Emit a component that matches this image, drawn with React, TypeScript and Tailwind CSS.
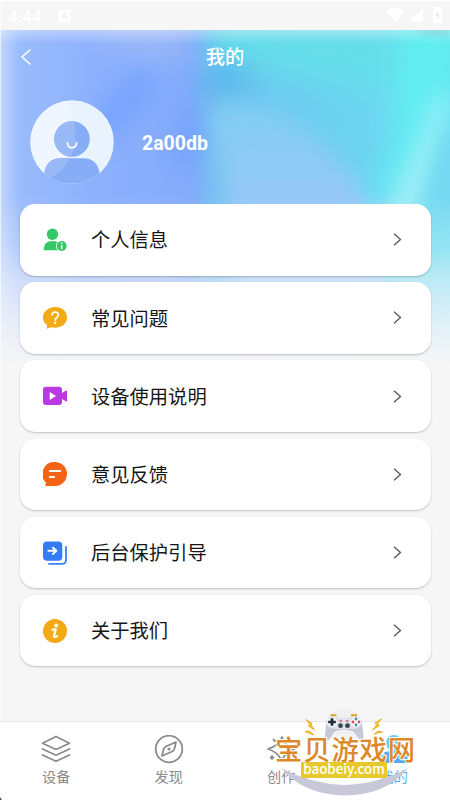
import React from "react";

const cjk = "font-['Roboto','Noto_Sans_CJK_SC',sans-serif]";

function Backdrop() {
  return (
    <svg className="absolute left-0 top-[30px]" width="450" height="335" viewBox="0 30 450 335" aria-hidden="true">
      <defs>
        <filter id="b6" x="-50%" y="-50%" width="200%" height="200%"><feGaussianBlur stdDeviation="7" /></filter>
        <filter id="b10" x="-50%" y="-50%" width="200%" height="200%"><feGaussianBlur stdDeviation="11" /></filter>
        <filter id="b14" x="-60%" y="-60%" width="220%" height="220%"><feGaussianBlur stdDeviation="14" /></filter>
        <linearGradient id="base" x1="0" y1="0" x2="1" y2="0">
          <stop offset="0" stopColor="#9cbefc" />
          <stop offset=".22" stopColor="#8db0fd" />
          <stop offset=".42" stopColor="#84acfa" />
          <stop offset=".5" stopColor="#6cc4f0" />
          <stop offset="1" stopColor="#6ee0f1" />
        </linearGradient>
        <linearGradient id="fade" x1="0" y1="195" x2="0" y2="365" gradientUnits="userSpaceOnUse">
          <stop offset="0" stopColor="#f6f6f6" stopOpacity="0" />
          <stop offset=".3" stopColor="#f0f2f8" stopOpacity=".28" />
          <stop offset=".5" stopColor="#f0f2f8" stopOpacity=".6" />
          <stop offset=".75" stopColor="#f2f3f8" stopOpacity=".86" />
          <stop offset="1" stopColor="#f6f6f6" />
        </linearGradient>
        <linearGradient id="left" x1="0" x2="1" y1="0" y2="0">
          <stop offset="0" stopColor="#fff" stopOpacity=".36" />
          <stop offset="1" stopColor="#fff" stopOpacity="0" />
        </linearGradient>
        <linearGradient id="top" x1="0" x2="0" y1="0" y2="1">
          <stop offset="0" stopColor="#fff" stopOpacity=".34" />
          <stop offset="1" stopColor="#fff" stopOpacity="0" />
        </linearGradient>
        <linearGradient id="wave" x1="0" x2="0" y1="120" y2="230" gradientUnits="userSpaceOnUse">
          <stop offset="0" stopColor="#84cdf3" />
          <stop offset="1" stopColor="#9cc6f9" />
        </linearGradient>
      </defs>
      <rect x="0" y="30" width="450" height="335" fill="url(#base)" />
      <path d="M85 130L150 60L150 90L110 140Z" fill="#6c9cff" filter="url(#b14)" opacity=".9" />
      <path d="M60 10L195 10L180 60L120 54Z" fill="#a0bbf8" filter="url(#b14)" opacity=".8" />
      <path d="M170 160L185 110L215 100L195 170Z" fill="#6a9ffa" filter="url(#b14)" opacity=".75" />
      <path d="M205 20L460 20L460 90L350 90L220 62Z" fill="#66deea" filter="url(#b14)" />
      <path d="M200 70L245 62L250 92L202 100Z" fill="#54b3ea" filter="url(#b14)" opacity=".8" />
      <path d="M207 108Q235 92 290 118Q350 150 385 225L375 310L240 310Q225 190 207 108Z" fill="url(#wave)" filter="url(#b10)" />
      <path d="M300 95Q360 110 390 190L335 135Z" fill="#6ad2ef" filter="url(#b14)" opacity=".9" />
      <path d="M400 20L465 10L450 100L415 180L365 210L395 150Z" fill="#5ef1f2" filter="url(#b14)" opacity=".85" />
      <path d="M440 90L450 100L430 170L410 235L370 240Q410 170 440 90Z" fill="#b2f3fb" filter="url(#b10)" opacity=".8" />
      <path d="M442 140L465 120L465 220L428 235Z" fill="#76d7f1" filter="url(#b10)" />
      <rect x="0" y="30" width="20" height="335" fill="url(#left)" />
      <rect x="0" y="30" width="450" height="14" fill="url(#top)" />
      <rect x="420" y="22" width="30" height="11" fill="#7fa9b4" opacity=".5" filter="url(#b6)" />
      <rect x="0" y="190" width="450" height="175" fill="url(#fade)" />
    </svg>
  );
}

function StatusBar() {
  return (
    <div className="relative flex h-[30px] shrink-0 items-center border-t border-white bg-[#f6f6f6] pl-[8px] pr-[7px] text-white">
      <span className="relative top-px w-[50px] font-['Roboto',sans-serif] text-[17px] font-medium leading-none">4:44</span>
      <svg width="13" height="14" viewBox="0 0 13 14">
        <rect x=".5" y=".5" width="12" height="13" rx="1.5" fill="#fff" />
        <path d="M3.5 10L6.5 3.5L9.5 10M4.5 8H8.5" fill="none" stroke="#f3f3f3" strokeWidth="1.4" />
      </svg>
      <svg className="ml-auto" width="57" height="18" viewBox="0 0 57 18" fill="#fff">
        <path d="M0 4Q9.500 -2 19 4L9.500 16Z" />
        <path d="M37 1V15H23Z" />
        <path d="M47 2H49V0H54V2H56V16H47Z" />
        <path d="M52 4L49 9H51.500V13L54.500 8H52Z" fill="#eee" />
      </svg>
    </div>
  );
}

function Avatar() {
  return (
    <svg width="84" height="84" viewBox="0 0 84 84">
      <defs>
        <clipPath id="disc"><circle cx="42" cy="42" r="41.800" /></clipPath>
        <clipPath id="person">
          <circle cx="42" cy="39" r="17.800" />
          <path d="M14.500 84V73C15 64 22 58.300 30 58.300H54C63 58.300 69 65 69.500 73V84Z" />
        </clipPath>
      </defs>
      <circle cx="42" cy="42" r="41.800" fill="#e9f3fe" />
      <path d="M35 1A42 42 0 0 0 14 73Q44 65 45 32Q44 13 35 1Z" fill="#eff6ff" />
      <g clipPath="url(#disc)">
        <g clipPath="url(#person)">
          <rect width="84" height="84" fill="#86adf5" />
          <path d="M0 0H38Q45 16 45.500 35Q45 65 19 79L0 84Z" fill="#98b9f6" />
        </g>
      </g>
      <path d="M37.500 43C37.800 49.300 46.200 49.300 46.500 43" fill="none" stroke="#f2f7ff" strokeWidth="2" strokeLinecap="round" />
    </svg>
  );
}

const icons: Record<string, React.ReactNode> = {
  profile: (
    <>
      <circle cx="9.500" cy="6.200" r="5.700" fill="#35c866" />
      <path d="M.7 22.300C.6 16 4 13 9.500 13C14 13 18 15 18 22.300Z" fill="#35c866" />
      <circle cx="18.700" cy="18" r="5.700" fill="#fff" />
      <circle cx="18.700" cy="18" r="4.900" fill="#35c866" />
      <path d="M18.700 14.600V16M18.700 17V21.200" stroke="#d9f7e3" strokeWidth="1.700" />
    </>
  ),
  question: (
    <>
      <path d="M12.500 1C19 1 24 5.300 24 11.300S19 21.700 12 21.700L8.200 21.200L3.800 22.800Q4.500 20.500 3.800 18.800Q0 16 0 11.200C0 5.300 5.500 1 12.500 1Z" fill="#f4aa16" />
      <path d="M9 8.800C9 5.200 15.500 5.300 15.400 9C15.300 11.300 12.300 11.700 12.300 14" fill="none" stroke="#fff" strokeWidth="1.800" strokeLinecap="round" />
      <circle cx="12.200" cy="17" r="1.200" fill="#fff" />
    </>
  ),
  video: (
    <>
      <path d="M3 2.800H16Q19 2.800 19 6V9L23.200 6.600Q24 6.300 24 7.200V17Q24 18 23.200 17.500L19 15V18Q19 21 16 21H3Q0 21 0 18V6Q0 2.800 3 2.800Z" fill="#b83ae0" />
      <path d="M7 8.600V15.400L12.500 12Z" fill="#fff" stroke="#fff" strokeWidth=".7" strokeLinejoin="round" />
    </>
  ),
  feedback: (
    <>
      <path d="M12 0A12 12 0 1 1 12 24H3Q2 24 2.400 23L3 20.600A12 12 0 0 1 12 0Z" fill="#f46213" />
      <path d="M6.800 9H17.300M6.800 15H11" stroke="#fff" strokeWidth="2" strokeLinecap="round" />
    </>
  ),
  guide: (
    <>
      <rect width="19.300" height="19.300" y=".4" rx="4" fill="#347cf4" />
      <path d="M5.500 9.800H13M10 6.700L13.300 9.800L10 13" fill="none" stroke="#fff" strokeWidth="2" strokeLinecap="round" strokeLinejoin="round" />
      <path d="M23 6V19Q23 22.900 19 22.900H6" fill="none" stroke="#3b80f4" strokeWidth="1.800" strokeLinecap="round" />
    </>
  ),
  about: (
    <>
      <circle cx="12" cy="12" r="12" fill="#f4aa16" />
      <circle cx="13.200" cy="6.500" r="1.900" fill="#fff" />
      <path d="M9.400 10.700L12.700 10.300L11 17Q10.800 18.500 14 17.200" fill="none" stroke="#fff" strokeWidth="2.300" strokeLinecap="round" strokeLinejoin="round" />
    </>
  ),
};

const rows = [
  { id: "profile", label: "个人信息" },
  { id: "question", label: "常见问题" },
  { id: "video", label: "设备使用说明" },
  { id: "feedback", label: "意见反馈" },
  { id: "guide", label: "后台保护引导" },
  { id: "about", label: "关于我们" },
];

function Row({ id, label }: { id: string; label: string }) {
  return (
    <button className="flex h-[71.500px] w-full items-center rounded-[15px] bg-white pl-[23.500px] pr-[29px] text-left shadow-[0_1px_2px_rgba(0,0,0,0.22)]">
      <svg width="24" height="24" viewBox="0 0 24 24">{icons[id]}</svg>
      <span className="ml-[24px] pt-[2.500px] text-[19.300px] leading-none text-[#161616]">{label}</span>
      <svg className="ml-auto" width="9" height="13" viewBox="0 0 9 13">
        <path d="M1 .8L7.500 6.500L1 12.200" fill="none" stroke="#55555b" strokeWidth="1.300" />
      </svg>
    </button>
  );
}

function Tab({ label, active, children }: { label: string; active?: boolean; children: React.ReactNode }) {
  return (
    <div className={`flex flex-1 flex-col items-center pt-[13px] ${active ? "text-[#58adf5]" : "text-[#8b8b8b]"}`}>
      <svg width="30" height="30" viewBox="0 0 30 30" fill="none" stroke="currentColor" strokeWidth="1.800" strokeLinejoin="round" strokeLinecap="round">
        {children}
      </svg>
      <span className="mt-[3px] text-[14.200px] leading-[18px]">{label}</span>
    </div>
  );
}

function Watermark() {
  return (
    <div className="pointer-events-none absolute left-[274px] top-[704px] h-[96px] w-[144px]">
      <svg className="absolute inset-0" width="144" height="96" viewBox="274 704 144 96">
        <circle cx="344" cy="726" r="18" fill="#f0f0f1" opacity=".9" />
        <path d="M281 768Q312 784 344 785Q378 784 408 768Q386 795.500 344 795.500Q303 794.500 281 768Z" fill="#c8c9d8" />
        <path d="M332 716.500Q344 720 356 716.500Q361 717 362 723L363.500 736Q363.500 741 360 740Q357 736 354 732Q350 729.500 344 729.500Q338 729.500 334 732L329 740Q325 742 325 736L326 723Q327 717 332 716.500Z" fill="#c6c8d7" />
        <path d="M332 716Q344 720 356 716Q361 717 362 724Q360 728 354 729L334 729Q328 728 326 724Q327 717 332 716Z" fill="#dfe1ea" />
        <path d="M330.500 715.200H336.500M351 715.200H357" stroke="#dba42c" strokeWidth="2" />
        <circle cx="332" cy="722" r="5" fill="#f4f6fa" />
        <circle cx="356" cy="722" r="5" fill="#f4f6fa" />
        <path d="M328.200 722H335.800M332 718.200V725.800" stroke="#202b35" strokeWidth="2.700" />
        <g fill="#d75261"><circle cx="353" cy="722" r="1.400" /><circle cx="359" cy="722" r="1.400" /></g>
        <g fill="#4a8f9d"><circle cx="356" cy="719" r="1.400" /><circle cx="356" cy="725" r="1.400" /></g>
        <g fill="#34464d"><circle cx="340.500" cy="725.700" r="2.400" /><circle cx="347.500" cy="725.700" r="2.400" /></g>
        <path d="M339.500 721H342M346 721H348.500" stroke="#d65a68" strokeWidth="1.500" />
        <path d="M306 719.500L312 723.500L311 725L314.500 730L308.500 726L309.500 724ZM305 731.500L309 731L314 735L308.500 733ZM381.500 719L375 723L376.500 725L372.500 730L379.500 725.500L377.500 723.500ZM374 734.500L378 731L382.500 732L377.500 733Z" fill="#ffc51e" stroke="#e9a118" strokeWidth=".8" />
      </svg>
      <div className="absolute left-px top-[27px] whitespace-nowrap font-['Noto_Sans_CJK_SC',sans-serif] text-[27.300px] font-medium leading-[34px] tracking-[0.900px] text-[#dc892b] [-webkit-text-stroke:2px_white] [paint-order:stroke_fill]">宝贝游戏网</div>
      <div className="absolute left-[27px] top-[58px] flex h-[16px] w-[86px] items-center justify-center bg-[#e6ca2b] font-['Noto_Sans_CJK_SC',sans-serif] text-[13.300px] font-medium leading-[16px] text-white"><span className="relative -top-px">baobeiy.com</span></div>
    </div>
  );
}

export default function App() {
  return (
    <div className={`relative flex h-[800px] w-[450px] flex-col overflow-hidden bg-[#f6f6f6] ${cjk}`}>
      <Backdrop />
      <StatusBar />
      <header className="relative flex h-[54px] shrink-0 items-center justify-center text-white">
        <svg className="absolute left-[20px] top-[18px]" width="12" height="18" viewBox="0 0 12 18">
          <path d="M10.500 1.500L2 9L10.500 16.500" fill="none" stroke="#fff" strokeWidth="1.500" />
        </svg>
        <h1 className="pt-[2px] text-[19.300px] font-medium leading-none">我的</h1>
      </header>
      <section className="relative flex h-[120px] shrink-0 items-start pl-[30px] pt-[16px]">
        <Avatar />
        <span className="ml-[28px] mt-[33px] text-[19.500px] font-bold leading-[22px] text-white">2a00db</span>
      </section>
      <main className="relative flex grow flex-col gap-[6.700px] px-[19.500px]">
        {rows.map((r) => <Row key={r.id} {...r} />)}
      </main>
      <nav className="relative flex h-[79px] shrink-0 border-t border-[#e5e7e8] bg-white">
        <Tab label="设备">
          <path d="M15 1.500L28.500 8.200L15 14.500L1.500 8.200ZM1.500 14L15 20.200L28.500 14M1.500 20L15 26.300L28.500 20" />
        </Tab>
        <Tab label="发现">
          <circle cx="15" cy="14" r="13.300" />
          <path d="M22 7L20.500 13.500Q20 15 18.700 16.200L8 21L9.500 14.500Q10 13 11.300 11.800Z" />
          <circle cx="15" cy="14" r=".7" />
        </Tab>
        <Tab label="创作">
          <path d="M16 2Q18 10.500 28 14Q18 17.500 16 26Q12 17 2 14Q13 10.500 16 2ZM6 21V24M4.500 22.500H7.500M9 6L7.500 4.500" />
        </Tab>
        <Tab label="我的" active>
          <circle cx="15" cy="8" r="8" fill="#64c9fb" stroke="none" />
          <path d="M1 26Q0 17 11 16H20Q29 17 29 26Q28 28 26 28H4Q1 28 1 26Z" fill="#50a9f8" stroke="none" />
        </Tab>
      </nav>
      <Watermark />
      <div className="pointer-events-none absolute inset-y-0 left-0 w-px bg-white/60" />
      <svg className="absolute bottom-0 left-0" width="3" height="3"><path d="M0 0L2 3H0Z" fill="#555" /></svg>
    </div>
  );
}
